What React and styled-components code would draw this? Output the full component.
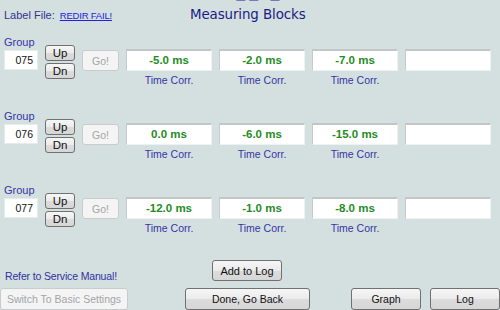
import React from 'react';
import styled, { createGlobalStyle } from 'styled-components';

const GlobalStyle = createGlobalStyle`
  html, body {
    margin: 0;
    padding: 0;
    background: #d4e0e0;
  }
  #root {
    width: 500px;
    height: 310px;
    overflow: hidden;
  }
`;

const Page = styled.div`
  width: 500px;
  height: 310px;
  display: flex;
  flex-direction: column;
  background: #d4e0e0;
  font-family: "Liberation Sans", Arial, sans-serif;
  overflow: hidden;
`;

const TopStrip = styled.div`
  height: 2px;
  overflow: hidden;
  display: flex;
  align-items: flex-end;
  padding-left: 211px;
`;

const ClippedTitle = styled.div`
  font-size: 16px;
  line-height: 16px;
  font-weight: bold;
  color: #2a2aa0;
  letter-spacing: 4px;
  white-space: pre;
  margin-top: -14px;
`;

const Header = styled.div`
  display: grid;
  grid-template-columns: 186px auto;
  align-items: baseline;
  padding: 5px 0 0 4px;
  height: 28px;
  box-sizing: border-box;
`;

const LabelLine = styled.div`
  font-size: 11px;
  color: #333390;
  display: flex;
  gap: 5px;
  align-items: baseline;
`;

const Link = styled.a`
  font-size: 9.5px;
  color: #2222dd;
  text-decoration: underline;
  cursor: pointer;
  letter-spacing: -0.2px;
`;

const Title = styled.div`
  font-family: "DejaVu Sans", Verdana, sans-serif;
  font-size: 13.4px;
  color: #1b1b85;
  letter-spacing: -0.1px;
`;

const Blocks = styled.div`
  display: flex;
  flex-direction: column;
  gap: 22px;
  margin-top: 6px;
`;

const Block = styled.div`
  display: grid;
  grid-template-columns: 34px 30px 37px repeat(4, 86px);
  column-gap: 7px;
  align-items: start;
  padding-left: 4px;
`;

const GroupCol = styled.div`
  display: flex;
  flex-direction: column;
`;

const GroupLabel = styled.div`
  font-size: 11px;
  line-height: 14px;
  color: #3535a5;
`;

const GroupInput = styled.div`
  margin-top: 1px;
  height: 20px;
  background: #fff;
  border: 1px solid #e6ecec;
  box-sizing: border-box;
  font-size: 10.5px;
  line-height: 18px;
  color: #111;
  text-align: right;
  padding-right: 4px;
`;

const StepCol = styled.div`
  display: flex;
  flex-direction: column;
  gap: 2px;
  margin-top: 10px;
`;

const Button = styled.button`
  width: ${p => p.$w || 70}px;
  height: ${p => p.$h || 22}px;
  margin: 0;
  margin-top: ${p => p.$top || 0}px;
  margin-left: ${p => p.$left || 0}px;
  padding: 0;
  box-sizing: border-box;
  font-family: "Liberation Sans", Arial, sans-serif;
  font-size: ${p => p.$fs || 10.5}px;
  color: ${p => (p.disabled ? '#a4a4a4' : '#111')};
  border: 1px solid ${p => (p.disabled ? '#c9cccc' : '#707070')};
  border-radius: 3px;
  background: ${p =>
    p.disabled
      ? '#f4f4f4'
      : 'linear-gradient(#f6f6f6 0%, #ebebeb 50%, #dcdcdc 51%, #d6d6d6 100%)'};
  flex-shrink: 0;
`;

const Cell = styled.div`
  display: flex;
  flex-direction: column;
  align-items: center;
  margin-top: 14px;
`;

const ValueBox = styled.div`
  width: 100%;
  height: 22px;
  box-sizing: border-box;
  background: #fff;
  border-top: 2px solid #c2c6c6;
  border-left: 1px solid #c6caca;
  border-right: 1px solid #eef2f2;
  border-bottom: 1px solid #eef2f2;
  font-size: 11.5px;
  font-weight: bold;
  color: #1f8c1f;
  text-align: center;
  line-height: 19px;
`;

const Caption = styled.div`
  margin-top: 2px;
  font-size: 10.5px;
  line-height: 14px;
  height: 14px;
  color: #3535a5;
`;

const FooterTop = styled.div`
  display: grid;
  grid-template-columns: 207px auto;
  align-items: end;
  padding-left: 5px;
  margin-top: 25px;
`;

const Notice = styled.div`
  font-size: 10.5px;
  line-height: 13px;
  margin-bottom: -2px;
  color: #3030a0;
  letter-spacing: -0.15px;
`;

const FooterBottom = styled.div`
  display: flex;
  margin-top: 7px;
`;

const groups = [
  { id: '075', values: ['-5.0 ms', '-2.0 ms', '-7.0 ms', ''] },
  { id: '076', values: ['0.0 ms', '-6.0 ms', '-15.0 ms', ''] },
  { id: '077', values: ['-12.0 ms', '-1.0 ms', '-8.0 ms', ''] },
];

function GroupBlock({ group }) {
  return (
    <Block>
      <GroupCol>
        <GroupLabel>Group</GroupLabel>
        <GroupInput>{group.id}</GroupInput>
      </GroupCol>
      <StepCol>
        <Button $w={30} $h={16} $fs={11.5}>Up</Button>
        <Button $w={30} $h={16} $fs={11.5}>Dn</Button>
      </StepCol>
      <Button $w={37} $h={21} $top={15} disabled>Go!</Button>
      {group.values.map((v, i) => (
        <Cell key={i}>
          <ValueBox>{v}</ValueBox>
          <Caption>{v ? 'Time Corr.' : ''}</Caption>
        </Cell>
      ))}
    </Block>
  );
}

export default function App() {
  return (
    <Page>
      <GlobalStyle />
      <TopStrip>
        <ClippedTitle>{'I  __ _'}</ClippedTitle>
      </TopStrip>
      <Header>
        <LabelLine>
          Label File:
          <Link>REDIR FAIL!</Link>
        </LabelLine>
        <Title>Measuring Blocks</Title>
      </Header>
      <Blocks>
        {groups.map(g => (
          <GroupBlock key={g.id} group={g} />
        ))}
      </Blocks>
      <FooterTop>
        <Notice>Refer to Service Manual!</Notice>
        <Button $w={70} $h={21} $fs={11}>Add to Log</Button>
      </FooterTop>
      <FooterBottom>
        <Button $w={128} disabled $fs={10.5}>Switch To Basic Settings</Button>
        <Button $w={125} $left={57}>Done, Go Back</Button>
        <Button $w={70} $left={41}>Graph</Button>
        <Button $w={70} $left={9}>Log</Button>
      </FooterBottom>
    </Page>
  );
}
